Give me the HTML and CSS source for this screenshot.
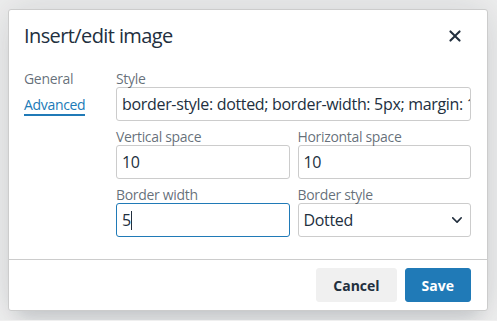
FILE: index.html
```html
<!DOCTYPE html>
<html lang="en">
<head>
<meta charset="UTF-8">
<title>Insert/edit image</title>
<link rel="stylesheet" href="styles.css">
</head>
<body>
<div class="dialog">
  <div class="dialog-header">
    <div class="dialog-title">Insert/edit image</div>
    <button class="close-btn" aria-label="Close">
      <svg width="24" height="24" viewBox="0 0 24 24"><path d="M17.3 8.2L13.4 12l3.9 3.8a1 1 0 0 1-1.5 1.5L12 13.4l-3.8 3.9a1 1 0 0 1-1.5-1.5l3.9-3.8-3.9-3.8a1 1 0 0 1 1.5-1.5l3.8 3.9 3.8-3.9a1 1 0 0 1 1.5 1.5z"/></svg>
    </button>
  </div>
  <div class="dialog-body">
    <div class="tabs">
      <div class="tab">General</div>
      <div class="tab active">Advanced</div>
    </div>
    <div class="form">
      <div class="field">
        <label>Style</label>
        <div class="input">border-style: dotted; border-width: 5px; margin: 10px;</div>
      </div>
      <div class="row">
        <div class="field">
          <label>Vertical space</label>
          <div class="input">10</div>
        </div>
        <div class="field">
          <label>Horizontal space</label>
          <div class="input">10</div>
        </div>
      </div>
      <div class="row">
        <div class="field">
          <label>Border width</label>
          <div class="input focused">5<span class="caret"></span></div>
        </div>
        <div class="field">
          <label>Border style</label>
          <div class="input select">
            <span>Dotted</span>
            <svg width="10" height="10" viewBox="0 0 10 10"><path d="M8.7 2.2c.3-.3.8-.3 1 0 .4.4.4.9 0 1.2L5.7 7.8c-.3.3-.9.3-1.2 0L.2 3.4a.8.8 0 0 1 0-1.2c.3-.3.8-.3 1.1 0L5 6l3.7-3.8z"/></svg>
          </div>
        </div>
      </div>
    </div>
  </div>
  <div class="dialog-footer">
    <button class="btn secondary">Cancel</button>
    <button class="btn primary">Save</button>
  </div>
</div>
</body>
</html>
```
FILE: styles.css
```css
body { margin: 0; padding: 9px 8px; background: #efefef; font-family: 'Open Sans', sans-serif; color: #222f3e; letter-spacing: -0.02em; }
.dialog { width: 480px; box-sizing: border-box; background: #fff; border: 1px solid #ccc; border-radius: 3px; box-shadow: 0 16px 16px -10px rgba(34,47,62,0.15), 0 0 40px 1px rgba(34,47,62,0.15); }
.dialog-header { display: flex; align-items: center; justify-content: space-between; padding: 9px 16px 0 15px; }
.dialog-title { font-size: 20px; line-height: 26px; letter-spacing: -0.03em; }
.close-btn { width: 34px; height: 34px; padding: 0; margin-right: -1px; border: none; background: none; display: flex; align-items: center; justify-content: center; }
.close-btn svg { fill: #222f3e; }
.dialog-body { display: flex; padding: 17px 16px 22px 15px; }
.tabs { width: 92px; flex-shrink: 0; }
.tab { font-size: 14px; line-height: 18px; color: rgba(34,47,62,0.7); margin-bottom: 6px; border-bottom: 2px solid transparent; display: table; }
.tab.active { color: #207ab7; border-bottom-color: #207ab7; }
.form { flex-grow: 1; display: flex; flex-direction: column; gap: 7px; min-width: 0; }
.row { display: grid; grid-template-columns: 1fr 1fr; gap: 8px; }
.field label { display: block; font-size: 14px; line-height: 17px; color: rgba(34,47,62,0.7); }
.input { height: 34px; box-sizing: border-box; border: 1px solid #ccc; border-radius: 3px; padding: 0 5px; font-size: 16px; line-height: 32px; white-space: nowrap; overflow: hidden; }
.input.focused { border-color: #207ab7; }
.caret { display: inline-block; width: 1px; height: 19px; background: #222f3e; vertical-align: -4px; }
.input.select { display: flex; align-items: center; justify-content: space-between; padding-right: 8px; }
.input.select svg { fill: #222f3e; }
.dialog-footer { display: flex; justify-content: flex-end; gap: 8px; padding: 8px 16px; border-top: 1px solid #ccc; }
.btn { height: 34px; padding: 0 16px; border-radius: 3px; font-family: inherit; font-size: 14px; font-weight: 700; border: 1px solid; letter-spacing: 0; }
.btn.secondary { background: #f0f0f0; border-color: #f0f0f0; color: #222f3e; }
.btn.primary { background: #207ab7; border-color: #207ab7; color: #fff; }
```
